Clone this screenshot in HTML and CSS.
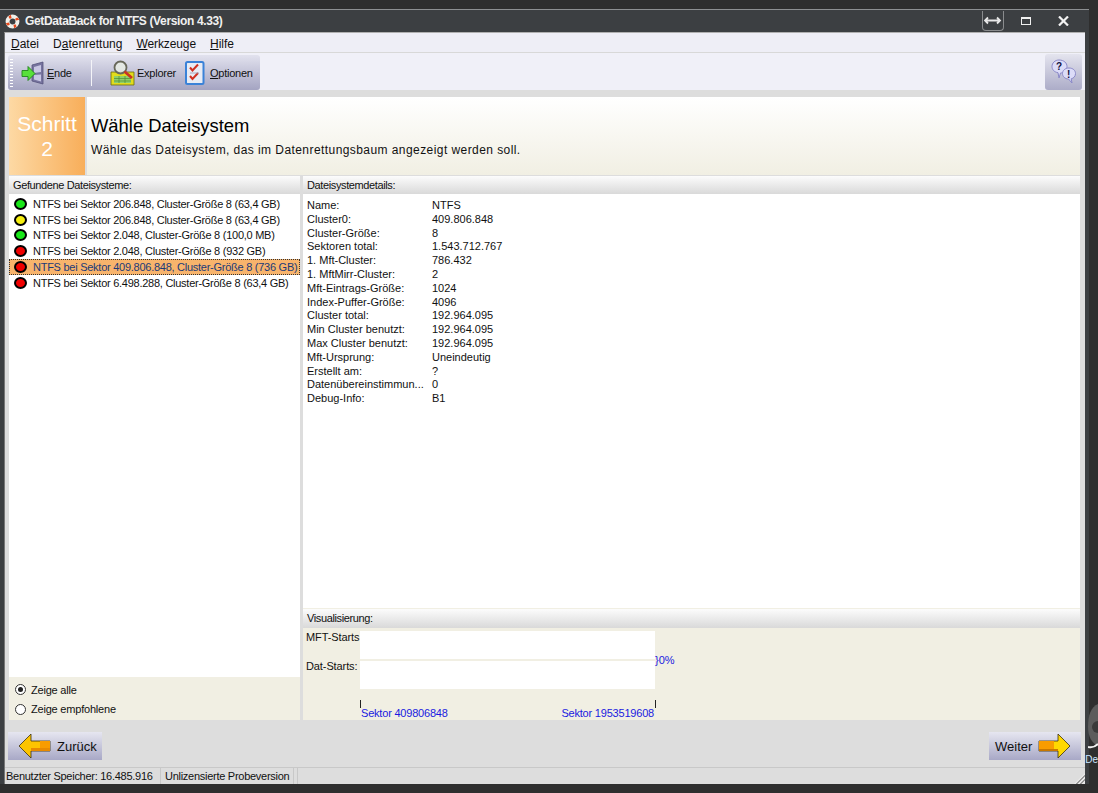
FILE: index.html
```html
<!DOCTYPE html>
<html lang="de">
<head>
  <meta charset="UTF-8" />
  <title>GetDataBack for NTFS</title>
  <link rel="stylesheet" href="styles.css" />
</head>
<body>

<div class="window">
  <div class="titlebar">
    <svg class="app-icon" width="15" height="15" viewBox="0 0 16 16">
      <circle cx="8" cy="8" r="5.300" fill="none" stroke="#f0f0ea" stroke-width="4.200"/>
      <path d="M3.600 3 A7.400 7.400 0 0 1 6.200 .8 L7 4.200 A4 4 0 0 0 5.200 5.400 Z" fill="#e8481c"/>
      <path d="M12.400 13 A7.400 7.400 0 0 1 9.800 15.200 L9 11.800 A4 4 0 0 0 10.800 10.600 Z" fill="#e8481c"/>
      <path d="M13 3.600 A7.400 7.400 0 0 1 15.200 6.200 L11.800 7 A4 4 0 0 0 10.600 5.200 Z" fill="#e8481c"/>
      <path d="M3 12.400 A7.400 7.400 0 0 1 .8 9.800 L4.200 9 A4 4 0 0 0 5.400 10.800 Z" fill="#e8481c"/>
    </svg>
    <span class="title-text">GetDataBack for NTFS (Version 4.33)</span>
    <div class="window-btns">
      <div class="btn-resize">
        <svg width="18" height="9" viewBox="0 0 18 9"><path d="M1 4.500h15M4 1.500L1 4.500l3 3M13 1.500l3 3-3 3" fill="none" stroke="#e8e8e8" stroke-width="1.800"/></svg>
      </div>
      <div class="btn-max"></div>
      <svg class="btn-close" width="11" height="10" viewBox="0 0 11 10"><path d="M1 .5l9 9M10 .5l-9 9" stroke="#f2f2f2" stroke-width="2.200"/></svg>
    </div>
  </div>

  <div class="client">
    <div class="menubar">
      <span class="menu-item"><u>D</u>atei</span>
      <span class="menu-item">D<u>a</u>tenrettung</span>
      <span class="menu-item"><u>W</u>erkzeuge</span>
      <span class="menu-item"><u>H</u>ilfe</span>
    </div>

    <div class="toolbar-row">
      <div class="toolbar">
        <div class="grip"></div>
        <div class="tool tool-ende">
          <svg width="24" height="24" viewBox="0 0 24 24">
            <path d="M11 4 L22 1 V23 L11 20 Z" fill="#77749f" stroke="#55537c" stroke-width=".8"/>
            <path d="M13 6 L20 4 V11 L13 12 Z M13 14 L20 13.500 V20.500 L13 18.500 Z" fill="#c8c6e4"/>
            <path d="M1 9.500h6V5.500l7 7-7 7v-4H1Z" fill="#58e03a" stroke="#23851c" stroke-width=".9"/>
          </svg>
          <span class="tool-label"><u>E</u>nde</span>
        </div>
        <div class="tool-sep"></div>
        <div class="tool tool-explorer">
          <svg width="25" height="26" viewBox="0 0 25 26">
            <path d="M1 12h23v13H1Z" fill="#e2dc1c" stroke="#6a6a10" stroke-width=".8"/>
            <path d="M4 16h17v7H4Z" fill="#8fd06a"/>
            <path d="M4 18.500h17M4 21h17M9 16v7M15 16v7" stroke="#4d8a30" stroke-width=".7"/>
            <circle cx="10.500" cy="7.500" r="6" fill="#e8ece4" fill-opacity=".85" stroke="#68685a" stroke-width="1.800"/>
            <path d="M14.500 11.500L22 18" stroke="#c83428" stroke-width="2.800"/>
          </svg>
          <span class="tool-label">Explorer</span>
        </div>
        <div class="tool tool-options">
          <svg width="20" height="24" viewBox="0 0 20 24">
            <rect x="1" y="1" width="17.500" height="22" rx="1.500" fill="#e8ecf4" stroke="#3a82d8" stroke-width="2"/>
            <path d="M5 6.500l2.500 3L13 3.500M5 15l2.500 3L13 12" fill="none" stroke="#d03020" stroke-width="2"/>
            <path d="M5 12h9" stroke="#9a9ab0" stroke-width=".8"/>
          </svg>
          <span class="tool-label"><u>O</u>ptionen</span>
        </div>
      </div>
      <div class="help-btn">
        <svg width="30" height="30" viewBox="0 0 30 30">
          <path d="M10 3c5 0 8 3 8 6.500S15 16 11.500 16L10 21l-1-5.300C5 15 3 12.500 3 9.500 3 6 6 3 10 3Z" fill="#dcdcf8" stroke="#8a88c8"/>
          <path d="M20 11c4 0 6.500 2.500 6.500 5.500 0 2.800-1.800 4.800-4.300 5.300L23 26l-3.500-4c-3.500 0-6-2.500-6-5.500S16 11 20 11Z" fill="#dcdcf8" stroke="#8a88c8"/>
          <text x="7" y="12.500" class="help-q">?</text>
          <text x="18" y="20.500" class="help-q">!</text>
        </svg>
      </div>
    </div>

    <div class="step-header">
      <div class="step-badge">Schritt<br />2</div>
      <div class="step-text">
        <h1 class="step-title">Wähle Dateisystem</h1>
        <p class="step-desc">Wähle das Dateisystem, das im Datenrettungsbaum angezeigt werden soll.</p>
      </div>
    </div>

    <div class="panes">
      <div class="pane pane-left">
        <div class="pane-head">Gefundene Dateisysteme:</div>
        <ul class="fs-list">
          <li class="fs-row"><span class="dot green"></span>NTFS bei Sektor 206.848, Cluster-Größe 8 (63,4 GB)</li>
          <li class="fs-row"><span class="dot yellow"></span>NTFS bei Sektor 206.848, Cluster-Größe 8 (63,4 GB)</li>
          <li class="fs-row"><span class="dot green"></span>NTFS bei Sektor 2.048, Cluster-Größe 8 (100,0 MB)</li>
          <li class="fs-row"><span class="dot red"></span>NTFS bei Sektor 2.048, Cluster-Größe 8 (932 GB)</li>
          <li class="fs-row selected"><span class="dot red"></span>NTFS bei Sektor 409.806.848, Cluster-Größe 8 (736 GB)</li>
          <li class="fs-row"><span class="dot red"></span>NTFS bei Sektor 6.498.288, Cluster-Größe 8 (63,4 GB)</li>
        </ul>
        <div class="filter">
          <div class="radio-row"><span class="radio checked"></span>Zeige alle</div>
          <div class="radio-row"><span class="radio"></span>Zeige empfohlene</div>
        </div>
      </div>

      <div class="pane pane-right">
        <div class="pane-head">Dateisystemdetails:</div>
        <dl class="details">
          <dt>Name:</dt><dd>NTFS</dd>
          <dt>Cluster0:</dt><dd>409.806.848</dd>
          <dt>Cluster-Größe:</dt><dd>8</dd>
          <dt>Sektoren total:</dt><dd>1.543.712.767</dd>
          <dt>1. Mft-Cluster:</dt><dd>786.432</dd>
          <dt>1. MftMirr-Cluster:</dt><dd>2</dd>
          <dt>Mft-Eintrags-Größe:</dt><dd>1024</dd>
          <dt>Index-Puffer-Größe:</dt><dd>4096</dd>
          <dt>Cluster total:</dt><dd>192.964.095</dd>
          <dt>Min Cluster benutzt:</dt><dd>192.964.095</dd>
          <dt>Max Cluster benutzt:</dt><dd>192.964.095</dd>
          <dt>Mft-Ursprung:</dt><dd>Uneindeutig</dd>
          <dt>Erstellt am:</dt><dd>?</dd>
          <dt>Datenübereinstimmun...</dt><dd>0</dd>
          <dt>Debug-Info:</dt><dd>B1</dd>
        </dl>
        <div class="pane-head vis-head">Visualisierung:</div>
        <div class="vis">
          <div class="vis-labels">
            <span>MFT-Starts</span>
            <span>Dat-Starts:</span>
          </div>
          <div class="vis-main">
            <div class="vis-bars">
              <div class="vis-bar"></div>
              <div class="vis-bar"></div>
              <span class="vis-pct">}0%</span>
            </div>
            <div class="vis-scale">
              <span class="scale-start">Sektor 409806848</span>
              <span class="scale-end">Sektor 1953519608</span>
            </div>
          </div>
        </div>
      </div>
    </div>

    <div class="nav-bar">
      <div class="nav-btn nav-back">
        <svg width="33" height="26" viewBox="0 0 33 26">
          <path d="M1 13L13 1v7h19v10H13v7Z" fill="#fdc400" stroke="#3a3010" stroke-width=".8"/>
          <path d="M13 15h19v3H13Z" fill="#e88a00"/>
          <path d="M22 8h10v7H22Z" fill="#f89c00"/>
        </svg>
        <span>Zurück</span>
      </div>
      <div class="nav-btn nav-next">
        <span>Weiter</span>
        <svg width="33" height="26" viewBox="0 0 33 26">
          <path d="M32 13L20 1v7H1v10h19v7Z" fill="#ffd800" stroke="#3a3010" stroke-width=".8"/>
          <path d="M1 8h15v10H1Z" fill="#f89c00"/>
          <path d="M1 16h19v2H1Z" fill="#c87800"/>
        </svg>
      </div>
    </div>

    <div class="statusbar">
      <div class="status-cell cell-mem">Benutzter Speicher: 16.485.916</div>
      <div class="status-cell cell-lic">Unlizensierte Probeversion</div>
      <div class="status-cell cell-rest"></div>
      <div class="size-grip"></div>
    </div>
  </div>
</div>

<svg class="desktop-arc" width="10" height="48" viewBox="0 0 10 48">
  <path d="M10 1C3 4 0 12 0 24c0 10 4 16 10 19Z" fill="#5c5c5c"/>
  <circle cx="10" cy="24" r="6" fill="#3a3a3a"/>
  <path d="M0 44c4 1 7 0 10-3" fill="none" stroke="#f0f0f0" stroke-width="2"/>
</svg>
<span class="desktop-label">De</span>

</body>
</html>
```

FILE: styles.css
```css
* {
  box-sizing: border-box;
  margin: 0;
  padding: 0;
}

html, body {
  height: 100%;
  overflow: hidden;
  background: #2e2e2e;
  font-family: "Liberation Sans", Arial, sans-serif;
  font-size: 11px;
  color: #111;
}

body {
  position: relative;
  padding-top: 9px;
}

.window {
  width: 1089px;
  height: 775px;
  background: #3c3f42;
  border-top: 1px solid #8d8f91;
  display: flex;
  flex-direction: column;
  padding: 0 4px 0 4px;
}

.titlebar {
  height: 22px;
  margin: 0 -4px;
  padding: 0 0 0 5px;
  display: flex;
  align-items: center;
  flex-shrink: 0;
}

.app-icon {
  margin-right: 5px;
}

.title-text {
  flex: 1;
  color: #f0f0f0;
  font-size: 12px;
  font-weight: bold;
  letter-spacing: -.36px;
}

.window-btns {
  display: flex;
  align-items: center;
  align-self: stretch;
}

.btn-resize {
  width: 22px;
  height: 20px;
  margin-top: -1px;
  margin-right: 17px;
  border: 1px solid #8a8c8e;
  border-top: none;
  border-radius: 0 0 4px 4px;
  display: flex;
  align-items: center;
  justify-content: center;
}

.btn-max {
  width: 10px;
  height: 8px;
  margin-right: 27px;
  border: 1px solid #f0f0f0;
  border-top-width: 2px;
}

.btn-close {
  margin-right: 20px;
}

.client {
  flex: 1;
  min-height: 0;
  background: #dddddd;
  border-top: 1px solid #b0b0b0;
  display: flex;
  flex-direction: column;
  border-left: 1px solid #777;
}

.menubar {
  height: 20px;
  background: #eeeef6;
  border-bottom: 1px solid #d8d8d8;
  display: flex;
  align-items: center;
  padding: 2px 0 0 6px;
  gap: 14px;
  font-size: 12px;
  flex-shrink: 0;
}

.menu-item:nth-child(3) {
  letter-spacing: -.1px;
}

.toolbar-row {
  height: 37px;
  background: #f0f0f8;
  display: flex;
  justify-content: space-between;
  padding: 2px 3px 0 3px;
  flex-shrink: 0;
}

.toolbar {
  width: 252px;
  height: 35px;
  border-radius: 3px;
  display: flex;
  align-items: center;
  background: linear-gradient(#e2e2ee, #a4a4c2);
  padding-left: 2px;
}

.grip {
  width: 3px;
  height: 28px;
  margin-right: 8px;
  background: repeating-linear-gradient(#fff 0 1px, transparent 1px 3px);
}

.tool {
  display: flex;
  align-items: center;
  gap: 2px;
}

.tool-ende {
  width: 70px;
}

.tool-label {
  font-size: 11px;
  letter-spacing: -.25px;
}

.tool-sep {
  width: 1px;
  height: 26px;
  background: #f4f4f8;
  margin-right: 18px;
}

.tool-explorer {
  width: 75px;
}

.tool-options {
  gap: 5px;
}

.help-btn {
  width: 37px;
  height: 36px;
  margin-top: -1px;
  border-radius: 3px;
  background: linear-gradient(#e4e4ee, #acacc8);
  display: flex;
  align-items: center;
  justify-content: center;
}

.help-q {
  font-size: 10px;
  font-weight: bold;
  fill: #101040;
  font-family: "Liberation Sans", sans-serif;
}

.step-header {
  height: 78px;
  margin: 7px 5px 1px 4px;
  display: flex;
  flex-shrink: 0;
  background: linear-gradient(#ffffff, #f1efe3);
}

.step-badge {
  width: 78px;
  background: linear-gradient(to right, #fdd9a4, #f8ae5a);
  border-right: 2px solid #dddddd;
  color: #fff;
  font-size: 21px;
  line-height: 25px;
  text-align: center;
  padding-top: 14px;
}

.step-text {
  flex: 1;
  padding: 18px 0 0 4px;
}

.step-title {
  font-size: 18.4px;
  font-weight: normal;
  line-height: 22px;
  color: #000;
}

.step-desc {
  font-size: 12px;
  line-height: 14px;
  margin-top: 6px;
  letter-spacing: .43px;
}

.panes {
  flex: 1;
  min-height: 0;
  display: flex;
  gap: 3px;
  margin: 0 5px 0 4px;
}

.pane {
  display: flex;
  flex-direction: column;
  background: #f1efe3;
}

.pane-left {
  width: 291px;
  flex-shrink: 0;
}

.pane-right {
  flex: 1;
}

.pane-head {
  height: 18px;
  line-height: 18px;
  padding-left: 4px;
  background: linear-gradient(#fcfcfc, #d9d9d9);
  letter-spacing: -.38px;
  flex-shrink: 0;
}

.fs-list {
  list-style: none;
  flex: 1;
  background: #fff;
  padding-top: 2px;
}

.fs-row {
  height: 15.8px;
  display: flex;
  align-items: center;
  padding-left: 5px;
  white-space: nowrap;
  letter-spacing: -.26px;
}

.fs-row.selected {
  background: #f8b46c;
  outline: 1px dotted #333;
  outline-offset: -1px;
  color: #1a3a78;
}

.dot {
  width: 13px;
  height: 12px;
  border-radius: 50%;
  border: 2px solid #000;
  margin-right: 6px;
  flex-shrink: 0;
}

.dot.green {
  background: #19e619;
}

.dot.yellow {
  background: #f5ee10;
}

.dot.red {
  background: #f00000;
}

.filter {
  height: 43px;
  padding: 3px 0 0 6px;
}

.radio-row {
  height: 19.5px;
  display: flex;
  align-items: center;
  gap: 5px;
  letter-spacing: -.2px;
}

.radio {
  width: 11px;
  height: 11px;
  border-radius: 50%;
  border: 1px solid #333;
  background: #fff;
  display: flex;
  align-items: center;
  justify-content: center;
}

.radio.checked::after {
  content: "";
  width: 5px;
  height: 5px;
  border-radius: 50%;
  background: #222;
}

.details {
  flex: 1;
  background: #fff;
  display: grid;
  grid-template-columns: 125px 1fr;
  grid-auto-rows: 13.8px;
  align-content: start;
  padding: 5px 0 0 4px;
  margin-bottom: 1px;
}

.details dt,
.details dd {
  line-height: 13.8px;
  white-space: nowrap;
}

.vis-head {
  height: 19px;
  line-height: 19px;
}

.vis {
  height: 92px;
  display: flex;
  flex-shrink: 0;
}

.vis-labels {
  width: 57px;
  padding: 3px 0 0 3px;
  display: flex;
  flex-direction: column;
  gap: 17px;
  white-space: nowrap;
  letter-spacing: -.1px;
}

.vis-main {
  width: 330px;
  padding-top: 3px;
}

.vis-bars {
  width: 295px;
  display: flex;
  flex-direction: column;
  gap: 2px;
  position: relative;
}

.vis-bar {
  height: 28px;
  background: #fff;
}

.vis-pct {
  position: absolute;
  left: 295px;
  top: 23px;
  color: #1a1ae0;
}

.vis-scale {
  width: 296px;
  margin-top: 11px;
  display: flex;
  justify-content: space-between;
  color: #1a1ae0;
  border-left: 1px solid #222;
  border-right: 1px solid #222;
  height: 8px;
  line-height: 26px;
  letter-spacing: -.2px;
  padding-right: 1px;
}

.nav-bar {
  height: 47px;
  display: flex;
  justify-content: space-between;
  padding: 12px 4px 0 3px;
  flex-shrink: 0;
}

.nav-btn {
  height: 28px;
  background: linear-gradient(#e6e6f0, #a8a8c6);
  display: flex;
  align-items: center;
  font-size: 13px;
}

.nav-back {
  width: 94px;
  gap: 6px;
  padding-left: 10px;
}

.nav-next {
  width: 92px;
  gap: 6px;
  padding-left: 6px;
}

.statusbar {
  height: 17px;
  display: flex;
  gap: 3px;
  border-top: 1px solid #c8c8c8;
  flex-shrink: 0;
  position: relative;
}

.status-cell {
  border-right: 1px solid #c8c8c8;
  line-height: 16px;
  padding-left: 1px;
  white-space: nowrap;
  letter-spacing: -.27px;
}

.cell-mem {
  width: 156px;
}

.cell-lic {
  width: 130px;
}

.cell-rest {
  flex: 1;
  border-right: none;
  border-left: 1px solid #c8c8c8;
}

.size-grip {
  position: absolute;
  right: 0;
  bottom: 0;
  width: 11px;
  height: 11px;
  background: repeating-linear-gradient(135deg, #999 0 1px, #e8e8e8 1px 3px);
  clip-path: polygon(100% 0, 100% 100%, 0 100%);
}

.desktop-arc {
  position: absolute;
  right: 0;
  top: 703px;
}

.desktop-label {
  position: absolute;
  right: 0;
  top: 754px;
  color: #cde6ff;
  font-size: 10px;
}
```
